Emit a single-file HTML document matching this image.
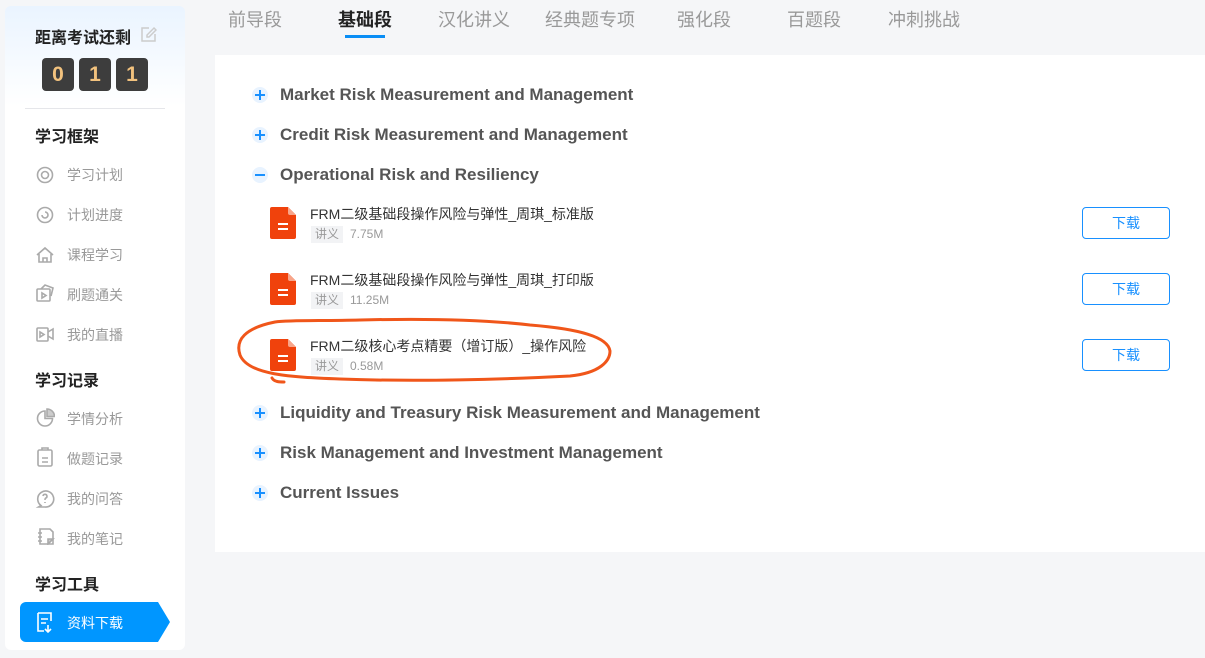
<!DOCTYPE html>
<html><head><meta charset="utf-8"><style>
*{margin:0;padding:0;box-sizing:border-box}
body{width:1205px;height:658px;background:#f5f6f8;font-family:"Liberation Sans","Noto Sans CJK SC",sans-serif;position:relative;overflow:hidden}
.abs{position:absolute;white-space:nowrap}
.side{position:absolute;left:5px;top:6px;width:180px;height:644px;background:linear-gradient(#eaf4ff 0,#fff 100px,#fff);border-radius:6px}
.h{font-size:16px;font-weight:bold;color:#222}
.cnt{position:absolute;top:58px;width:32px;height:33px;background:#3d3d3d;border-radius:4px;color:#f2c27e;font-weight:bold;font-size:21px;text-align:center;line-height:33px}
.it{font-size:14px;color:#999}
.tab{position:absolute;top:6px;font-size:18px;color:#999}
.main{position:absolute;left:215px;top:55px;width:990px;height:497px;background:#fff}
.sec{position:absolute;left:280px;font-size:17px;font-weight:bold;color:#555;transform:translateY(-50%)}
.pl{position:absolute;left:252px;width:16px;height:16px;border-radius:50%;background:#e8f3ff;transform:translateY(-50%)}
.pl:before{content:"";position:absolute;left:3px;top:7px;width:10px;height:2px;background:#1890ff}
.pl.p:after{content:"";position:absolute;left:7px;top:3px;width:2px;height:10px;background:#1890ff}
.ft{position:absolute;left:310px;font-size:14px;color:#333}
.tag{position:absolute;left:311px;font-size:12px;color:#999;background:#f2f3f5;padding:0 4px;height:17px;line-height:17px}
.sz{position:absolute;left:350px;font-size:12px;color:#999;line-height:17px}
.btn{position:absolute;left:1082px;width:88px;height:32px;border:1px solid #1890ff;border-radius:4px;color:#1890ff;font-size:14px;text-align:center;line-height:30px}
</style></head><body>
<div class="side"></div>
<div class="abs h" style="left:35px;top:24px">距离考试还剩</div>
<svg class="abs" style="left:140px;top:26px" width="17" height="17" viewBox="0 0 17 17"><path d="M9 2H2v13h13V8" fill="none" stroke="#ccc" stroke-width="1.5"/><path d="M14 2l2 2-7 7H7V9z" fill="none" stroke="#ccc" stroke-width="1.5"/></svg>
<div class="cnt" style="left:42px">0</div><div class="cnt" style="left:79px">1</div><div class="cnt" style="left:116px">1</div>
<div class="abs" style="left:25px;top:108px;width:140px;height:1px;background:#e5e6ea"></div>
<div class="abs h" style="left:35px;top:123px">学习框架</div>
<div class="abs h" style="left:35px;top:367px">学习记录</div>
<div class="abs h" style="left:35px;top:571px">学习工具</div>
<div class="abs it" style="left:67px;top:165px">学习计划</div>
<div class="abs it" style="left:67px;top:205px">计划进度</div>
<div class="abs it" style="left:67px;top:245px">课程学习</div>
<div class="abs it" style="left:67px;top:285px">刷题通关</div>
<div class="abs it" style="left:67px;top:325px">我的直播</div>
<div class="abs it" style="left:67px;top:409px">学情分析</div>
<div class="abs it" style="left:67px;top:449px">做题记录</div>
<div class="abs it" style="left:67px;top:489px">我的问答</div>
<div class="abs it" style="left:67px;top:529px">我的笔记</div>
<svg class="abs" style="left:35px;top:165px" width="20" height="380" viewBox="0 0 20 380" fill="none" stroke="#aaa" stroke-width="1.6">
<circle cx="10" cy="10" r="7.5"/><circle cx="10" cy="10" r="3.5"/>
<circle cx="10" cy="50" r="7.5"/><path d="M7 50a3 3 0 1 0 3-3"/>
<path d="M2 90l8-7 8 7M4 88v9h12v-9M8 97v-4h4v4"/>
<rect x="2" y="124" width="13" height="12" rx="1"/><path d="M6 124l4-4 8 3-2 8M7 128v5l4-2.5z"/>
<rect x="2" y="163" width="11" height="13" rx="1"/><path d="M13 167l5-3v10l-5-3M5 167v5l4-2.5z"/>
<path d="M10 246a7.5 7.5 0 1 0 7.5 7.5H10z"/><path d="M12 244v7.5h7.5a7.5 7.5 0 0 0-7.5-7.5z" fill="#ccc"/>
<rect x="3" y="285" width="14" height="16" rx="1.5"/><path d="M7 293h6M7 297h6M7 285v-2h6v2"/>
<path d="M6 340.5A8 8 0 1 1 10 342H3.5z"/><path d="M8 331a2 2 0 1 1 2.5 2.2c-.5.3-.5.8-.5 1.8M10 337v1"/>
<path d="M5 364h10l3 3v12H5zM3 368h4M3 372h4M3 376h4"/><path d="M13 379l5-5h-5z" fill="#ccc"/>
</svg>
<svg class="abs" style="left:20px;top:602px" width="152" height="40" viewBox="0 0 152 40"><path d="M6 0H138l12 20-12 20H6a6 6 0 0 1-6-6V6a6 6 0 0 1 6-6z" fill="#0096ff"/><path d="M18 11h13v8M18 11v18h6M21 17h7M21 21h5M28 23v7M25 27l3 3 3-3" fill="none" stroke="#fff" stroke-width="1.6"/></svg>
<div class="abs" style="left:67px;top:613px;font-size:14px;color:#fff">资料下载</div>
<div class="tab" style="left:228px">前导段</div>
<div class="tab" style="left:338px;color:#222;font-weight:bold">基础段</div>
<div class="abs" style="left:345px;top:35px;width:40px;height:3px;background:#0a8ef5"></div>
<div class="tab" style="left:438px">汉化讲义</div>
<div class="tab" style="left:545px">经典题专项</div>
<div class="tab" style="left:677px">强化段</div>
<div class="tab" style="left:787px">百题段</div>
<div class="tab" style="left:888px">冲刺挑战</div>
<div class="main"></div>
<div class="pl p" style="top:95px"></div><div class="sec" style="top:95px">Market Risk Measurement and Management</div>
<div class="pl p" style="top:135px"></div><div class="sec" style="top:135px">Credit Risk Measurement and Management</div>
<div class="pl" style="top:175px"></div><div class="sec" style="top:175px">Operational Risk and Resiliency</div>
<div class="pl p" style="top:413px"></div><div class="sec" style="top:413px">Liquidity and Treasury Risk Measurement and Management</div>
<div class="pl p" style="top:453px"></div><div class="sec" style="top:453px">Risk Management and Investment Management</div>
<div class="pl p" style="top:493px"></div><div class="sec" style="top:493px">Current Issues</div>
<svg class="abs" style="left:270px;top:207px" width="27" height="164" viewBox="0 0 27 164">
<g id="f"><path d="M2 0h16l8 8v22a2 2 0 0 1-2 2H2a2 2 0 0 1-2-2V2a2 2 0 0 1 2-2z" fill="#f0420c"/><path d="M18 0l8 8h-6a2 2 0 0 1-2-2z" fill="#f8a58a"/><path d="M8 17h10M8 22h10" stroke="#fff" stroke-width="2"/></g>
<use href="#f" y="66"/><use href="#f" y="132"/></svg>
<div class="ft" style="top:204px">FRM二级基础段操作风险与弹性_周琪_标准版</div>
<div class="tag" style="top:226px">讲义</div><div class="sz" style="top:226px">7.75M</div>
<div class="btn" style="top:207px">下载</div>
<div class="ft" style="top:270px">FRM二级基础段操作风险与弹性_周琪_打印版</div>
<div class="tag" style="top:292px">讲义</div><div class="sz" style="top:292px">11.25M</div>
<div class="btn" style="top:273px">下载</div>
<div class="ft" style="top:336px">FRM二级核心考点精要（增订版）_操作风险</div>
<div class="tag" style="top:358px">讲义</div><div class="sz" style="top:358px">0.58M</div>
<div class="btn" style="top:339px">下载</div>
<svg class="abs" style="left:230px;top:310px" width="390" height="80" viewBox="0 0 390 80"><path d="M45 12C15 18 5 30 10 45c8 20 50 22 100 24 80 3 170 0 230-3 30-3 40-15 40-25-2-14-30-22-80-26C240 8 170 9 130 10 90 11 60 10 45 12M42 68c2 4 8 4 12 4" fill="none" stroke="#f0561a" stroke-width="3" stroke-linecap="round"/></svg>
</body></html>
